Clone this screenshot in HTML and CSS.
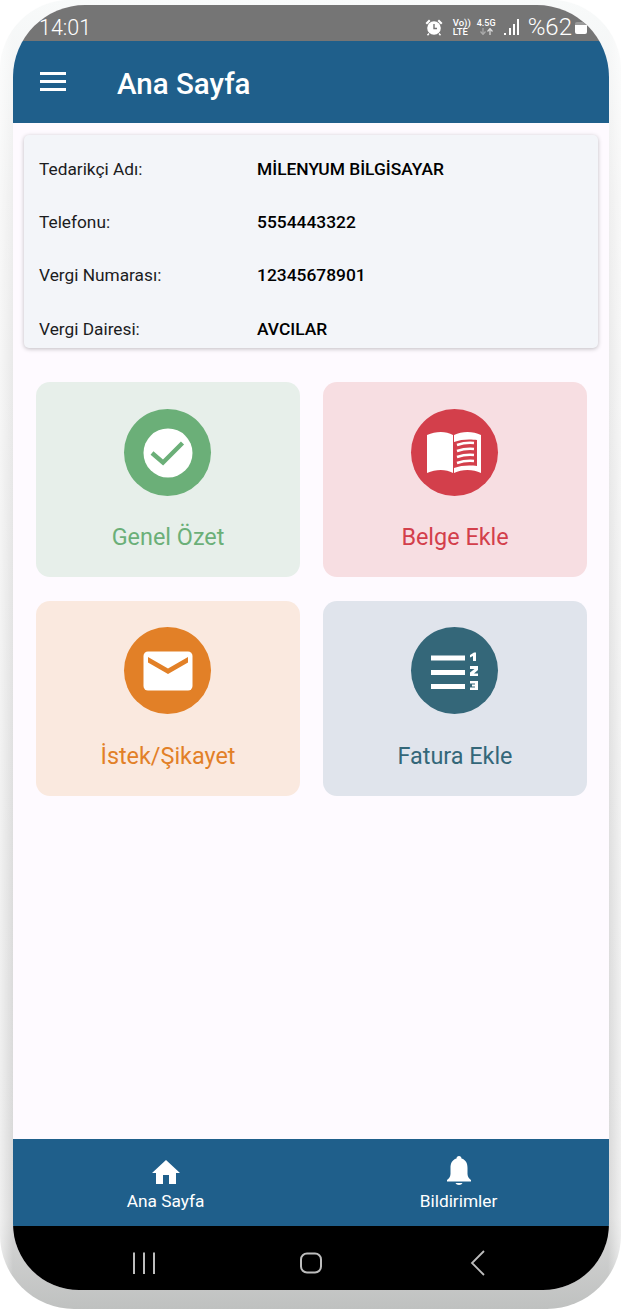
FILE: index.html
```html
<html>
<head>
    <meta charset="utf-8">
    <link rel="stylesheet" href="styles.css">
</head>
<body>
<div class="phone">
  <div class="screen">
    <div class="statusbar">
      <span class="clock">14:01</span>
      <div class="status_icons">
        <svg class="alarm" width="20" height="18" viewBox="0 0 20 18">
          <circle cx="10" cy="10" r="6.8" fill="#fff"/>
          <path d="M1.5 5 L5 1.5 L6.5 3 L3 6.5Z M18.5 5 L15 1.5 L13.5 3 L17 6.5Z" fill="#fff"/>
          <path d="M5 15.5 L3.5 17.3 M15 15.5 L16.5 17.3" stroke="#fff" stroke-width="1.4"/>
          <path d="M10 6 V10.5 H13" stroke="#757575" stroke-width="1.4" fill="none"/>
        </svg>
        <div class="volte"><span>Vo))</span><span>LTE</span></div>
        <div class="net"><span>4.5G</span><svg width="15" height="7" viewBox="0 0 15 7"><path d="M4 0V6M1.5 3.5L4 6.5L6.5 3.5" stroke="#aaa" stroke-width="1.2" fill="none"/><path d="M11 7V1M8.5 3.5L11 .5L13.5 3.5" stroke="#ddd" stroke-width="1.2" fill="none"/></svg></div>
        <svg class="signal" width="16" height="18" viewBox="0 0 16 18">
          <path d="M1 15h2v2H1z M6 10h2v7H6z M10 6h2v11h-2z M14 1h2v16h-2z" fill="#fff"/>
        </svg>
        <span class="percent">%62</span>
        <div class="battery"></div>
      </div>
    </div>

    <div class="appbar">
      <div class="hamburger"><i></i><i></i><i></i></div>
      <div class="appbar_title">Ana Sayfa</div>
    </div>

    <div class="content">
      <div class="info_card">
        <div class="info_row"><span class="info_label">Tedarikçi Adı:</span><span class="info_value">MİLENYUM BİLGİSAYAR</span></div>
        <div class="info_row"><span class="info_label">Telefonu:</span><span class="info_value">5554443322</span></div>
        <div class="info_row"><span class="info_label">Vergi Numarası:</span><span class="info_value">12345678901</span></div>
        <div class="info_row"><span class="info_label">Vergi Dairesi:</span><span class="info_value">AVCILAR</span></div>
      </div>

      <div class="tiles">
        <div class="tile green">
          <div class="tile_icon">
            <svg width="50" height="50" viewBox="0 0 50 50">
              <circle cx="25" cy="25" r="24.5" fill="#fff"/>
              <path d="M9 25 L20 34.5 L39.5 15" stroke="#6baf78" stroke-width="4.4" fill="none"/>
            </svg>
          </div>
          <div class="tile_label">Genel Özet</div>
        </div>
        <div class="tile red">
          <div class="tile_icon">
            <svg width="56" height="42" viewBox="0 0 56 42">
              <path d="M0 3 C9 -1 19 -1 26 3 V41 C19 37 9 37 0 41Z" fill="#fff"/>
              <path d="M27 3 C35 -1 46 -1 54 3 V41 C46 37 35 37 27 41Z" fill="#fff"/>
              <path d="M27 10 C34 7 44 7 50 8 V34 C44 33 34 33 27 36Z" fill="#d33f4b"/>
              <path d="M30 13 C36 11 42 10.5 47 11 M30 19 C36 17 42 16.5 47 17 M30 25 C36 23 42 22.5 47 23 M30 31 C36 29 42 28.5 47 29" stroke="#fff" stroke-width="2.4" fill="none"/>
            </svg>
          </div>
          <div class="tile_label">Belge Ekle</div>
        </div>
        <div class="tile orange">
          <div class="tile_icon">
            <svg width="50" height="40" viewBox="0 0 50 40">
              <rect x="0.5" y="0.5" width="49" height="39" rx="4.5" fill="#fff"/>
              <path d="M5 6 V11.5 L25 23 L45 11.5 V6 L25 17.5Z" fill="#e28027"/>
            </svg>
          </div>
          <div class="tile_label">İstek/Şikayet</div>
        </div>
        <div class="tile teal">
          <div class="tile_icon">
            <svg width="48" height="38" viewBox="0 0 48 38">
              <path d="M0 3.5h34v5H0z M0 18h34v5H0z M0 32h34v5H0z" fill="#fff"/>
              <path d="M39 3 L43 0.5 H45 V9 H42 V4 L39 5.5Z" fill="#fff"/>
              <path d="M39 14 H47 V18 L43 21.5 H47 V24 H39 V20.5 L43.5 17 H39Z" fill="#fff"/>
              <path d="M39 29 H47 V38 H39 V35.5 H44 V34.5 H41 V32.5 H44 V31.5 H39Z" fill="#fff"/>
            </svg>
          </div>
          <div class="tile_label">Fatura Ekle</div>
        </div>
      </div>
    </div>

    <div class="bottomnav">
      <div class="nav_item">
        <svg width="30" height="26" viewBox="0 0 30 26">
          <path d="M15 1 L29 14 H25 V25 H18 V16 H12 V25 H5 V14 H1Z" fill="#fff"/>
        </svg>
        <span>Ana Sayfa</span>
      </div>
      <div class="nav_item">
        <svg width="26" height="30" viewBox="0 0 26 30">
          <path d="M13 0 C14.5 0 15.5 1 15.5 2.5 C20 3.8 21.5 7.5 21.5 12 V18 C21.5 21 23.5 23 25 24 V25.5 H1 V24 C2.5 23 4.5 21 4.5 18 V12 C4.5 7.5 6 3.8 10.5 2.5 C10.5 1 11.5 0 13 0Z" fill="#fff"/>
          <path d="M9.5 27 H16.5 C15.5 29.6 10.5 29.6 9.5 27Z" fill="#fff"/>
        </svg>
        <span>Bildirimler</span>
      </div>
    </div>

    <div class="softkeys">
      <svg width="24" height="24" viewBox="0 0 24 24">
        <path d="M2 1.5V23 M12 1.5V23 M22 1.5V23" stroke="#bdbdbd" stroke-width="2" fill="none"/>
      </svg>
      <svg width="24" height="24" viewBox="0 0 24 24">
        <rect x="2" y="2.5" width="20" height="19" rx="6" stroke="#bdbdbd" stroke-width="2" fill="none"/>
      </svg>
      <svg width="24" height="26" viewBox="0 0 24 26">
        <path d="M18 1 L6 13 L18 25" stroke="#bdbdbd" stroke-width="1.8" fill="none"/>
      </svg>
    </div>
  </div>
</div>
</body>
</html>
```

FILE: styles.css
```css
html, body {
    margin: 0;
    padding: 0;
    background: #ffffff;
}
body {
    width: 621px;
    height: 1309px;
    overflow: hidden;
    font-family: Roboto, "Liberation Sans", sans-serif;
}
.phone {
    width: 621px;
    height: 1309px;
    box-sizing: border-box;
    padding: 5px 12px 19px 13px;
    border-radius: 70px 70px 74px 74px;
    background:
        linear-gradient(90deg, rgba(255,255,255,.6), rgba(255,255,255,0) 13px, rgba(255,255,255,0) 608px, rgba(255,255,255,.6)),
        linear-gradient(180deg, #f8fafa 0, #eeeeee 15%, #dcdcdc 70%, #d8d8d8 93%, #bfc1c0 100%);
}
.screen {
    height: 1285px;
    border-radius: 72px 72px 66px 66px;
    overflow: hidden;
    display: flex;
    flex-direction: column;
    background: #fefaff;
}

.statusbar {
    height: 36px;
    background: #757575;
    color: #fff;
    display: flex;
    justify-content: space-between;
    align-items: center;
    flex: none;
}
.clock {
    font-size: 21.5px;
    margin-left: 26px;
    margin-top: 9px;
    font-weight: 300;
}
.status_icons {
    display: flex;
    align-items: center;
    margin-top: 8px;
    margin-right: 22px;
}
.alarm { margin-right: 9px; }
.volte {
    font-size: 9.5px;
    line-height: 9px;
    font-weight: 500;
    display: flex;
    flex-direction: column;
    margin-right: 6px;
}
.net {
    font-size: 9px;
    line-height: 9px;
    font-weight: 500;
    display: flex;
    flex-direction: column;
    align-items: center;
    margin-right: 7px;
}
.signal { margin-right: 9px; }
.percent {
    font-size: 24px;
    font-weight: 300;
    margin-right: 3px;
}
.battery {
    width: 12px;
    height: 12px;
    background: linear-gradient(180deg, #9a9a9a 0 3px, #fff 3px);
    border-radius: 2px;
    margin-top: 1px;
}

.appbar {
    height: 82px;
    background: #1f5f8b;
    display: flex;
    align-items: center;
    flex: none;
    box-sizing: border-box;
    padding-left: 27px;
}
.hamburger {
    width: 26px;
    display: flex;
    flex-direction: column;
    gap: 5px;
    margin-top: -2px;
}
.hamburger i {
    display: block;
    height: 3px;
    background: #fff;
}
.appbar_title {
    color: #fff;
    font-size: 29.5px;
    font-weight: 500;
    margin-left: 51px;
    margin-top: 3px;
}

.content {
    flex: 1;
    padding: 12px 11px 0 11px;
}
.info_card {
    height: 213px;
    overflow: hidden;
    box-sizing: border-box;
    background: #f3f5f9;
    border-radius: 5px;
    box-shadow: 0 1px 4px rgba(0, 0, 0, 0.25);
    padding-top: 7px;
}
.info_row {
    height: 53.3px;
    display: flex;
    align-items: center;
    padding-left: 15px;
    font-size: 17.3px;
    color: #1c1c1e;
}
.info_label { width: 218px; }
.info_value {
    font-size: 17.4px;
    font-weight: 500;
    color: #000;
}

.tiles {
    display: grid;
    grid-template-columns: 264px 264px;
    grid-auto-rows: 195px;
    column-gap: 23px;
    row-gap: 24px;
    padding: 34px 12px 0 12px;
}
.tile {
    border-radius: 14px;
    display: flex;
    flex-direction: column;
    align-items: center;
    padding-top: 27px;
    box-sizing: border-box;
}
.tile_icon {
    width: 87px;
    height: 87px;
    border-radius: 50%;
    display: flex;
    align-items: center;
    justify-content: center;
    margin-right: 1px;
}
.tile_label {
    font-size: 23.4px;
    margin-top: 27px;
}
.green { background: #e7efea; color: #6baf78; }
.green .tile_icon { background: #6baf78; }
.red { background: #f7dee2; color: #d33f4b; }
.red .tile_icon { background: #d33f4b; }
.orange { background: #fae9df; color: #e28027; padding-top: 26px; }
.orange .tile_icon { background: #e28027; }
.teal { background: #e0e4ec; color: #346779; padding-top: 26px; }
.teal .tile_icon { background: #346779; }
.orange .tile_label, .teal .tile_label { margin-top: 28px; }

.bottomnav {
    height: 87px;
    background: #1f5f8b;
    display: flex;
    flex: none;
}
.nav_item {
    flex: 1;
    display: flex;
    flex-direction: column;
    align-items: center;
    justify-content: flex-start;
    box-sizing: border-box;
    color: #fff;
    font-size: 17.3px;
}
.nav_item:first-child { padding-left: 6px; padding-top: 20px; }
.nav_item:first-child span { margin-top: 6px; }
.nav_item:last-child { padding-right: 4px; padding-top: 17px; }
.nav_item:last-child span { margin-top: 5px; }

.softkeys {
    height: 64px;
    box-sizing: border-box;
    flex: none;
    background: #000;
    display: flex;
    justify-content: space-between;
    align-items: center;
    padding: 10px 119px 0 119px;
}
```
